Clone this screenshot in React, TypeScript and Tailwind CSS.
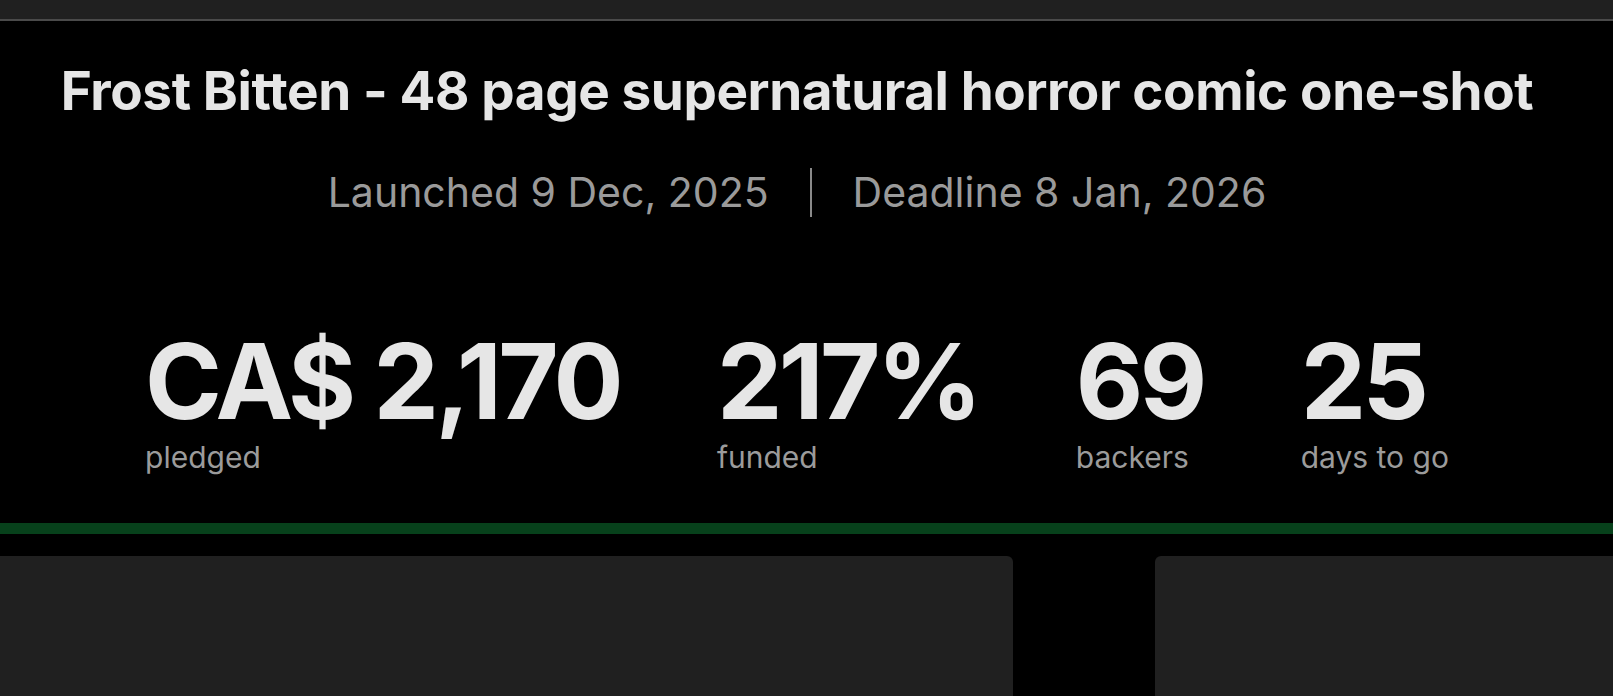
import React from "react";

const stats = [
  { value: "CA$ 2,170", label: "pledged" },
  { value: "217%", label: "funded" },
  { value: "69", label: "backers" },
  { value: "25", label: "days to go" },
];

export default function App() {
  return (
    <div className="w-[1613px] h-[696px] overflow-hidden bg-black font-['Inter',_'Noto_Sans',_sans-serif] flex flex-col">
      <div className="h-[21px] shrink-0 bg-[#202020] border-b-2 border-[#4a4a4a]" />
      <div className="pr-[19px] flex flex-col items-center">
        <h1 className="mt-[44px] text-[53px] leading-none font-bold tracking-[-0.4px] text-[#e6e6e6] text-center whitespace-nowrap">
          Frost Bitten - 48 page supernatural horror comic one-shot
        </h1>
        <div className="mt-[50px] flex items-center text-[41px] leading-none text-[#9a9a9a] whitespace-nowrap">
          <span>Launched 9 Dec, 2025</span>
          <span className="mx-[41px] w-[2px] h-[49px] bg-[#8a8a8a]" />
          <span>Deadline 8 Jan, 2026</span>
        </div>
        <div className="mt-[112px] flex gap-[97px]">
          {stats.map((s) => (
            <div key={s.label} className="flex flex-col">
              <div className="text-[104px] leading-none font-bold text-[#e6e6e6] tracking-[-0.035em] whitespace-nowrap">
                {s.value}
              </div>
              <div className="mt-[9px] text-[30px] leading-none text-[#9b9b9b] whitespace-nowrap">
                {s.label}
              </div>
            </div>
          ))}
        </div>
      </div>
      <div className="mt-[51px] h-[11px] shrink-0 bg-[#07411b]" />
      <div className="mt-[22px] flex-1 flex gap-[142px]">
        <div className="w-[1013px] bg-[#202020] rounded-tr-[6px]" />
        <div className="flex-1 bg-[#202020] rounded-tl-[6px]" />
      </div>
    </div>
  );
}
